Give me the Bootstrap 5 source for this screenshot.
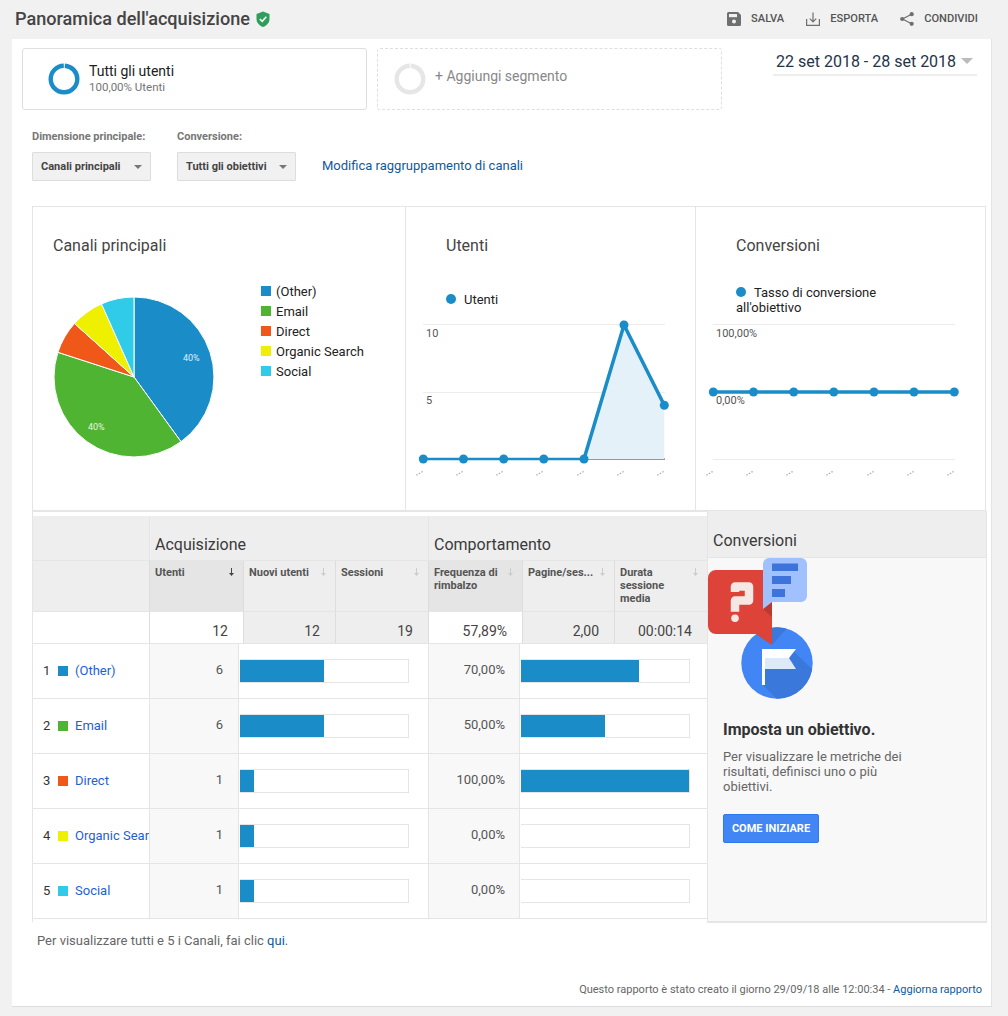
<!DOCTYPE html>
<html lang="it">
<head>
<meta charset="utf-8">
<title>Panoramica dell'acquisizione</title>
<link href="https://cdn.jsdelivr.net/npm/bootstrap@5.3.0/dist/css/bootstrap.min.css" rel="stylesheet">
<style>
html,body{height:1016px;overflow:hidden}
body{background:#f1f1f1;font-family:Roboto,"Liberation Sans",sans-serif;font-size:13px;color:#333;line-height:normal}
.topbar{height:39px;padding:0 30px 2px 15px}
.ptitle{font-size:18.1px;font-weight:500;color:#444;margin:0}
.tact{font-size:11.1px;font-weight:500;color:#555;margin-left:22px;gap:10px}
.sheet{margin:0 16px 0 12px;height:968px;background:#fff;border-right:1px solid #e4e4e4;border-bottom:1px solid #ddd;padding:9px 0 0 10px}
.segbox{width:345px;height:62px;border:1px solid #dfdfdf;border-radius:3px;padding-left:25px;gap:9px}
.segbox.dash{border-style:dashed;margin-left:10px;padding-left:16px;color:#888;font-size:14px}
.addlbl{margin-top:-7px}
.segtxt{margin-top:-2px}
.segname{font-size:14px;color:#212121}
.segsub{font-size:11.5px;color:#757575;margin-top:1px}
.datebox{width:204px;height:28px;margin-left:51px;border-bottom:2px solid #eee;padding-left:3px;font-size:16px;color:#243447}
.tri{width:0;height:0;border-left:6px solid transparent;border-right:6px solid transparent;border-top:6px solid #bbb}
.ctrls{padding:20px 0 0 10px;height:96px;gap:26px}
.clabel{font-size:11px;font-weight:700;color:#777;height:16px}
.csel{width:119px;height:29px;margin-top:6px;background:#f1f1f1;border:1px solid #ddd;border-radius:1px;padding:0 8px;font-size:11px;font-weight:700;color:#444}
.csel .tri{border-left-width:4px;border-right-width:4px;border-top-width:4px;border-top-color:#777}
.alink{color:#0f5a9c;text-decoration:none}
.modlink{margin-top:28px;font-size:13px}
.chartrow{margin-left:10px;width:954px;height:306px;border:1px solid #e5e5e5;border-bottom-width:2px}
.pane{height:100%}
.pane1{width:373px;border-right:1px solid #e5e5e5}
.pane2{width:290px;border-right:1px solid #e5e5e5}
.pane3{flex:1}
.chartsvg{display:block;width:100%;height:100%;font-family:Roboto,"Liberation Sans",sans-serif}
.lowerwrap{margin-left:10px;width:955px;height:411px}
.tablewrap{width:675px;padding-top:4px;border-left:1px solid #e5e5e5;height:410px}
.thgrp{display:grid;grid-template-columns:116px 279px 279px;height:44px;background:#eee}
.thgrp>div{font-size:16px;color:#3a3a3a;padding:19px 0 0 5px;border-left:1px solid #e5e5e5}
.thgrp>div:first-child,.thcols>div:first-child,.ttot>div:first-child{border-left:0}
.thcols,.ttot{display:grid;grid-template-columns:116px 94px 92px 93px 94px 92px 93px}
.thcols{height:51px;background:#eee;border-top:1px solid #e5e5e5}
.thcols>div{position:relative;font-size:11px;font-weight:700;color:#555;padding:5px 22px 0 5px;line-height:13px;border-left:1px solid #ddd}
.thcols .issort{background:#e5e5e5}
.sarr{position:absolute;right:8px;top:7px;width:7px;height:8px}
.ttot{height:32px;background:#eee;border-top:1px solid #e5e5e5}
.ttot>div{font-size:14px;color:#444;text-align:right;padding:11px 15px 0 0;border-left:1px solid #ddd}
.ttot .totwhite,.ttot .blank{background:#fff}
.trow{display:grid;grid-template-columns:116px 90px 189px 92px 187px;height:55px;border-top:1px solid #e5e5e5}
.trow:last-child{height:56px;border-bottom:1px solid #e5e5e5}
.cname{padding:0 0 2px 10px;overflow:hidden;white-space:nowrap;color:#333}
.crank{width:15px;flex:none}
.sw{display:inline-block;width:10px;height:10px;margin:2px 7px 0 0;flex:none}
.tlink{color:#1f5fd6;text-decoration:none;flex:none}
.cnum,.cpct{background:#f8f8f8;border-left:1px solid #e5e5e5;border-right:1px solid #e5e5e5;text-align:right;padding-right:15px;color:#555;line-height:52px}
.cpct{padding-right:14px}
.cbar{padding:15px 0 0 1px}
.trk{height:24px;width:169px;border:1px solid #e5e5e5;border-left:0;background:#fff}
.fil{height:22px;background:#1a8cc8}
.sidepanel{width:280px;height:412px;margin-top:-1px;border:1px solid #e5e5e5;border-bottom-width:2px;border-top:0;background:#f8f8f8}
.sidehead{height:47px;background:#eee;border-bottom:1px solid #e5e5e5;font-size:16px;color:#3a3a3a;padding:20px 0 0 5px}
.sideart{display:block;width:110px;height:142px}
.sidebody{padding:20px 15px 0 15px}
.sidettl{font-size:16px;font-weight:700;color:#333;margin:0 0 10px}
.sidetxt{color:#666;line-height:15px;width:190px;margin:0 0 20px}
.gobtn{--bs-btn-padding-x:0;--bs-btn-padding-y:0;--bs-btn-font-size:11px;--bs-btn-font-weight:700;--bs-btn-bg:#4285f4;--bs-btn-border-color:#2f78ee;--bs-btn-border-radius:2px;height:29px;line-height:27px;width:96px;white-space:nowrap}
.moretxt{margin:10px 0 0 15px;font-size:13px;color:#666}
.foot{text-align:right;font-size:11px;color:#666;padding-right:9px;margin-top:35px}
</style>
</head>
<body>
<div class="topbar d-flex align-items-center">
  <h1 class="ptitle">Panoramica dell'acquisizione</h1>
  <svg class="ms-1" width="18" height="18" viewBox="0 0 18 18" aria-hidden="true"><path d="M9 1.500 15.500 4v5c0 3.800-2.700 6.500-6.500 8C5.200 15.500 2.500 12.800 2.500 9V4z" fill="#2f9e5b"/><path d="M5.800 9 8.200 11.300 12.300 6.800" fill="none" stroke="#fff" stroke-width="1.600"/></svg>
  <div class="ms-auto d-flex align-items-center">
    <div class="tact d-flex align-items-center"><svg width="14" height="14" viewBox="0 0 14 14"><path d="M1.500 0H11L14 3V12.500A1.500 1.500 0 0 1 12.500 14H1.500A1.500 1.500 0 0 1 0 12.500V1.500A1.500 1.500 0 0 1 1.500 0Z" fill="#6f6f6f"/><rect x="2" y="2" width="8" height="3.200" fill="#f1f1f1"/><circle cx="7" cy="9.500" r="2" fill="#f1f1f1"/></svg>SALVA</div>
    <div class="tact d-flex align-items-center"><svg width="14" height="14" viewBox="0 0 14 14" fill="none" stroke="#6f6f6f" stroke-width="1.200"><path d="M.6 7V13.400H13.400V7"/><path d="M7 .5V9.800M3.800 6.700 7 9.900 10.200 6.700"/></svg>ESPORTA</div>
    <div class="tact d-flex align-items-center"><svg width="14" height="14" viewBox="0 0 14 14"><path d="M11.500 2.200 2.500 7 11.500 11.800" fill="none" stroke="#6f6f6f" stroke-width="1.200"/><circle cx="11.700" cy="2.200" r="2.100" fill="#6f6f6f"/><circle cx="2.200" cy="7" r="2.100" fill="#6f6f6f"/><circle cx="11.700" cy="11.800" r="2.100" fill="#6f6f6f"/></svg>CONDIVIDI</div>
  </div>
</div>

<main class="sheet">
  <div class="d-flex align-items-start">
    <div class="segbox d-flex align-items-center">
      <svg width="32" height="32" viewBox="0 0 32 32"><circle cx="16" cy="16" r="13.300" fill="none" stroke="#1a8cc8" stroke-width="4.400" stroke-dasharray="82 1.600" stroke-dashoffset="-0.800" transform="rotate(-90 16 16)"/></svg>
      <div class="segtxt"><div class="segname">Tutti gli utenti</div><div class="segsub">100,00% Utenti</div></div>
    </div>
    <div class="segbox dash d-flex align-items-center">
      <svg width="32" height="32" viewBox="0 0 32 32"><circle cx="16" cy="16" r="13.300" fill="none" stroke="#e6e6e6" stroke-width="4.400" stroke-dasharray="82 1.600" stroke-dashoffset="-0.800" transform="rotate(-90 16 16)"/></svg>
      <div class="addlbl">+ Aggiungi segmento</div>
    </div>
    <div class="datebox d-flex align-items-center justify-content-between"><span>22 set 2018 - 28 set 2018</span><span class="tri me-1"></span></div>
  </div>

  <div class="ctrls d-flex align-items-start">
    <div><div class="clabel">Dimensione principale:</div><div class="csel d-flex align-items-center justify-content-between"><span>Canali principali</span><span class="tri"></span></div></div>
    <div><div class="clabel">Conversione:</div><div class="csel d-flex align-items-center justify-content-between"><span>Tutti gli obiettivi</span><span class="tri"></span></div></div>
    <a class="alink modlink" href="#">Modifica raggruppamento di canali</a>
  </div>

  <div class="chartrow d-flex">
    <div class="pane pane1">
      <svg class="chartsvg" viewBox="33 207 372 303">
        <text x="53" y="251" font-size="16" fill="#444">Canali principali</text>
        <g stroke="#fff" stroke-width="1">
          <path d="M134 377V297A80 80 0 0 1 181 441.700Z" fill="#1a8cc8"/>
          <path d="M134 377 181 441.700A80 80 0 0 1 57.900 352.300Z" fill="#4fb431"/>
          <path d="M134 377 57.900 352.300A80 80 0 0 1 74.500 323.500Z" fill="#f0581a"/>
          <path d="M134 377 74.500 323.500A80 80 0 0 1 101.500 303.900Z" fill="#eef000"/>
          <path d="M134 377 101.500 303.900A80 80 0 0 1 134 297Z" fill="#2fcbe8"/>
        </g>
        <text x="183" y="361" font-size="9" fill="#dff1fb">40%</text>
        <text x="88" y="430" font-size="9" fill="#e8f6e1">40%</text>
        <g font-size="13" fill="#222">
          <rect x="261" y="286" width="10" height="10" fill="#1a8cc8"/><text x="276" y="296">(Other)</text>
          <rect x="261" y="306" width="10" height="10" fill="#4fb431"/><text x="276" y="316">Email</text>
          <rect x="261" y="326" width="10" height="10" fill="#f0581a"/><text x="276" y="336">Direct</text>
          <rect x="261" y="346" width="10" height="10" fill="#eef000"/><text x="276" y="356">Organic Search</text>
          <rect x="261" y="366" width="10" height="10" fill="#2fcbe8"/><text x="276" y="376">Social</text>
        </g>
      </svg>
    </div>
    <div class="pane pane2">
      <svg class="chartsvg" viewBox="406 207 289 303">
        <text x="446" y="251" font-size="16" fill="#444">Utenti</text>
        <circle cx="451" cy="299" r="5" fill="#1a8cc8"/><text x="464" y="304" font-size="13" fill="#222">Utenti</text>
        <path d="M423 324.500H665M423 392.500H665" stroke="#ececec"/>
        <path d="M584 459H665" stroke="#333"/>
        <text x="426" y="337" font-size="11" fill="#555">10</text><text x="426" y="404" font-size="11" fill="#555">5</text>
        <path d="M584 459 624 325 664.300 405.300V459Z" fill="#e4f1f9"/>
        <path d="M423.300 459H584" stroke="#1a8cc8" stroke-width="2.500" fill="none"/>
        <path d="M584 459 624 325 664.300 405.300" stroke="#1a8cc8" stroke-width="3.500" fill="none"/>
        <g fill="#1a8cc8"><circle cx="423.300" cy="459" r="4.500"/><circle cx="463.500" cy="459" r="4.500"/><circle cx="503.700" cy="459" r="4.500"/><circle cx="543.800" cy="459" r="4.500"/><circle cx="584" cy="459" r="4.500"/><circle cx="624" cy="325" r="4.500"/><circle cx="664.300" cy="405.300" r="4.500"/></g>
        <g fill="#888" font-size="11"><text transform="rotate(-30 416 476)" x="416" y="476">...</text><text transform="rotate(-30 456 476)" x="456" y="476">...</text><text transform="rotate(-30 496 476)" x="496" y="476">...</text><text transform="rotate(-30 536 476)" x="536" y="476">...</text><text transform="rotate(-30 577 476)" x="577" y="476">...</text><text transform="rotate(-30 617 476)" x="617" y="476">...</text><text transform="rotate(-30 657 476)" x="657" y="476">...</text></g>
      </svg>
    </div>
    <div class="pane pane3">
      <svg class="chartsvg" viewBox="696 207 289 303">
        <text x="736" y="251" font-size="16" fill="#444">Conversioni</text>
        <circle cx="741" cy="292" r="5" fill="#1a8cc8"/><text x="754" y="297" font-size="13" fill="#222">Tasso di conversione</text><text x="736" y="312" font-size="13" fill="#222">all'obiettivo</text>
        <path d="M713 324.500H955M713 459.500H955" stroke="#ececec"/>
        <text x="716" y="337" font-size="11" fill="#555">100,00%</text><text x="716" y="404" font-size="11" fill="#555">0,00%</text>
        <path d="M713.300 392H954.300" stroke="#1a8cc8" stroke-width="3.500"/>
        <g fill="#1a8cc8"><circle cx="713.300" cy="392" r="4.500"/><circle cx="753.500" cy="392" r="4.500"/><circle cx="793.700" cy="392" r="4.500"/><circle cx="833.800" cy="392" r="4.500"/><circle cx="874" cy="392" r="4.500"/><circle cx="914" cy="392" r="4.500"/><circle cx="954.300" cy="392" r="4.500"/></g>
        <g fill="#888" font-size="11"><text transform="rotate(-30 706 476)" x="706" y="476">...</text><text transform="rotate(-30 746 476)" x="746" y="476">...</text><text transform="rotate(-30 786 476)" x="786" y="476">...</text><text transform="rotate(-30 826 476)" x="826" y="476">...</text><text transform="rotate(-30 867 476)" x="867" y="476">...</text><text transform="rotate(-30 907 476)" x="907" y="476">...</text><text transform="rotate(-30 947 476)" x="947" y="476">...</text></g>
      </svg>
    </div>
  </div>

  <div class="lowerwrap d-flex">
    <div class="tablewrap">
      <div class="thgrp"><div></div><div>Acquisizione</div><div>Comportamento</div></div>
      <div class="thcols">
        <div></div>
        <div class="issort">Utenti<svg class="sarr" viewBox="0 0 7 8"><path d="M3 0H4V5H6L3.500 8 1 5H3Z" fill="#444"/></svg></div>
        <div>Nuovi utenti<svg class="sarr" viewBox="0 0 7 8"><path d="M3 0H4V5H6L3.500 8 1 5H3Z" fill="#ccc"/></svg></div>
        <div>Sessioni<svg class="sarr" viewBox="0 0 7 8"><path d="M3 0H4V5H6L3.500 8 1 5H3Z" fill="#ccc"/></svg></div>
        <div class="issort">Frequenza di rimbalzo<svg class="sarr" viewBox="0 0 7 8"><path d="M3 0H4V5H6L3.500 8 1 5H3Z" fill="#ccc"/></svg></div>
        <div>Pagine/ses...<svg class="sarr" viewBox="0 0 7 8"><path d="M3 0H4V5H6L3.500 8 1 5H3Z" fill="#ccc"/></svg></div>
        <div>Durata sessione media<svg class="sarr" viewBox="0 0 7 8"><path d="M3 0H4V5H6L3.500 8 1 5H3Z" fill="#ccc"/></svg></div>
      </div>
      <div class="ttot">
        <div class="blank"></div><div class="totwhite">12</div><div>12</div><div>19</div><div class="totwhite">57,89%</div><div>2,00</div><div>00:00:14</div>
      </div>
      <div class="trow">
        <div class="cname d-flex align-items-center"><span class="crank">1</span><span class="sw" style="background:#1a8cc8"></span><a class="tlink" href="#">(Other)</a></div>
        <div class="cnum">6</div><div class="cbar"><div class="trk"><div class="fil" style="width:84px"></div></div></div>
        <div class="cpct">70,00%</div><div class="cbar"><div class="trk"><div class="fil" style="width:118px"></div></div></div>
      </div>
      <div class="trow">
        <div class="cname d-flex align-items-center"><span class="crank">2</span><span class="sw" style="background:#4fb431"></span><a class="tlink" href="#">Email</a></div>
        <div class="cnum">6</div><div class="cbar"><div class="trk"><div class="fil" style="width:84px"></div></div></div>
        <div class="cpct">50,00%</div><div class="cbar"><div class="trk"><div class="fil" style="width:84px"></div></div></div>
      </div>
      <div class="trow">
        <div class="cname d-flex align-items-center"><span class="crank">3</span><span class="sw" style="background:#f0581a"></span><a class="tlink" href="#">Direct</a></div>
        <div class="cnum">1</div><div class="cbar"><div class="trk"><div class="fil" style="width:14px"></div></div></div>
        <div class="cpct">100,00%</div><div class="cbar"><div class="trk"><div class="fil" style="width:168px"></div></div></div>
      </div>
      <div class="trow">
        <div class="cname d-flex align-items-center"><span class="crank">4</span><span class="sw" style="background:#eef000"></span><a class="tlink" href="#">Organic Search</a></div>
        <div class="cnum">1</div><div class="cbar"><div class="trk"><div class="fil" style="width:14px"></div></div></div>
        <div class="cpct">0,00%</div><div class="cbar"><div class="trk"></div></div>
      </div>
      <div class="trow">
        <div class="cname d-flex align-items-center"><span class="crank">5</span><span class="sw" style="background:#2fcbe8"></span><a class="tlink" href="#">Social</a></div>
        <div class="cnum">1</div><div class="cbar"><div class="trk"><div class="fil" style="width:14px"></div></div></div>
        <div class="cpct">0,00%</div><div class="cbar"><div class="trk"></div></div>
      </div>
    </div>
    <aside class="sidepanel">
      <div class="sidehead">Conversioni</div>
      <svg class="sideart" viewBox="708 558 110 142">
        <defs><clipPath id="discclip"><circle cx="777" cy="663" r="35.700"/></clipPath></defs>
        <circle cx="777" cy="663" r="35.700" fill="#4285f4"/>
        <g clip-path="url(#discclip)" fill="#3b78dc"><path d="M770 625H790L772 645 756 634Z"/><path d="M790 648 815 672V700H778L763 685 765 669H790Z"/></g>
        <path d="M762 649H796L789 658H762Z" fill="#fff"/>
        <path d="M762 658H789L796 669H762Z" fill="#dbe9f9"/>
        <path d="M762 649H765V685H762Z" fill="#fff"/>
        <path d="M716 570H772V645L756 634H716A8 8 0 0 1 708 626V578A8 8 0 0 1 716 570Z" fill="#dd4339"/>
        <path d="M763 609 772 602V617Z" fill="#bb3a30"/>
        <path d="M769 558H801A6 6 0 0 1 807 564V596A6 6 0 0 1 801 602H772L763 609V564A6 6 0 0 1 769 558Z" fill="#a0c1fd"/>
        <path d="M772 563.500H798V571H772ZM772 576H791V584H772ZM772 589H785V597H772Z" fill="#3f73dc"/>
        <path d="M735 592V586.500H749V600.500H735V611.700" fill="none" stroke="#f4e7e4" stroke-width="8.500" stroke-linejoin="round"/>
        <circle cx="735" cy="618.300" r="3.800" fill="#f4e7e4"/>
      </svg>
      <div class="sidebody">
        <h2 class="sidettl">Imposta un obiettivo.</h2>
        <p class="sidetxt">Per visualizzare le metriche dei risultati, definisci uno o più obiettivi.</p>
        <button type="button" class="btn btn-primary gobtn">COME INIZIARE</button>
      </div>
    </aside>
  </div>
  <div class="moretxt">Per visualizzare tutti e 5 i Canali, fai clic <a class="alink" href="#">qui</a>.</div>
  <div class="foot">Questo rapporto è stato creato il giorno 29/09/18 alle 12:00:34 - <a class="alink" href="#">Aggiorna rapporto</a></div>
</main>
<script src="https://cdn.jsdelivr.net/npm/bootstrap@5.3.0/dist/js/bootstrap.bundle.min.js"></script>
</body>
</html>
